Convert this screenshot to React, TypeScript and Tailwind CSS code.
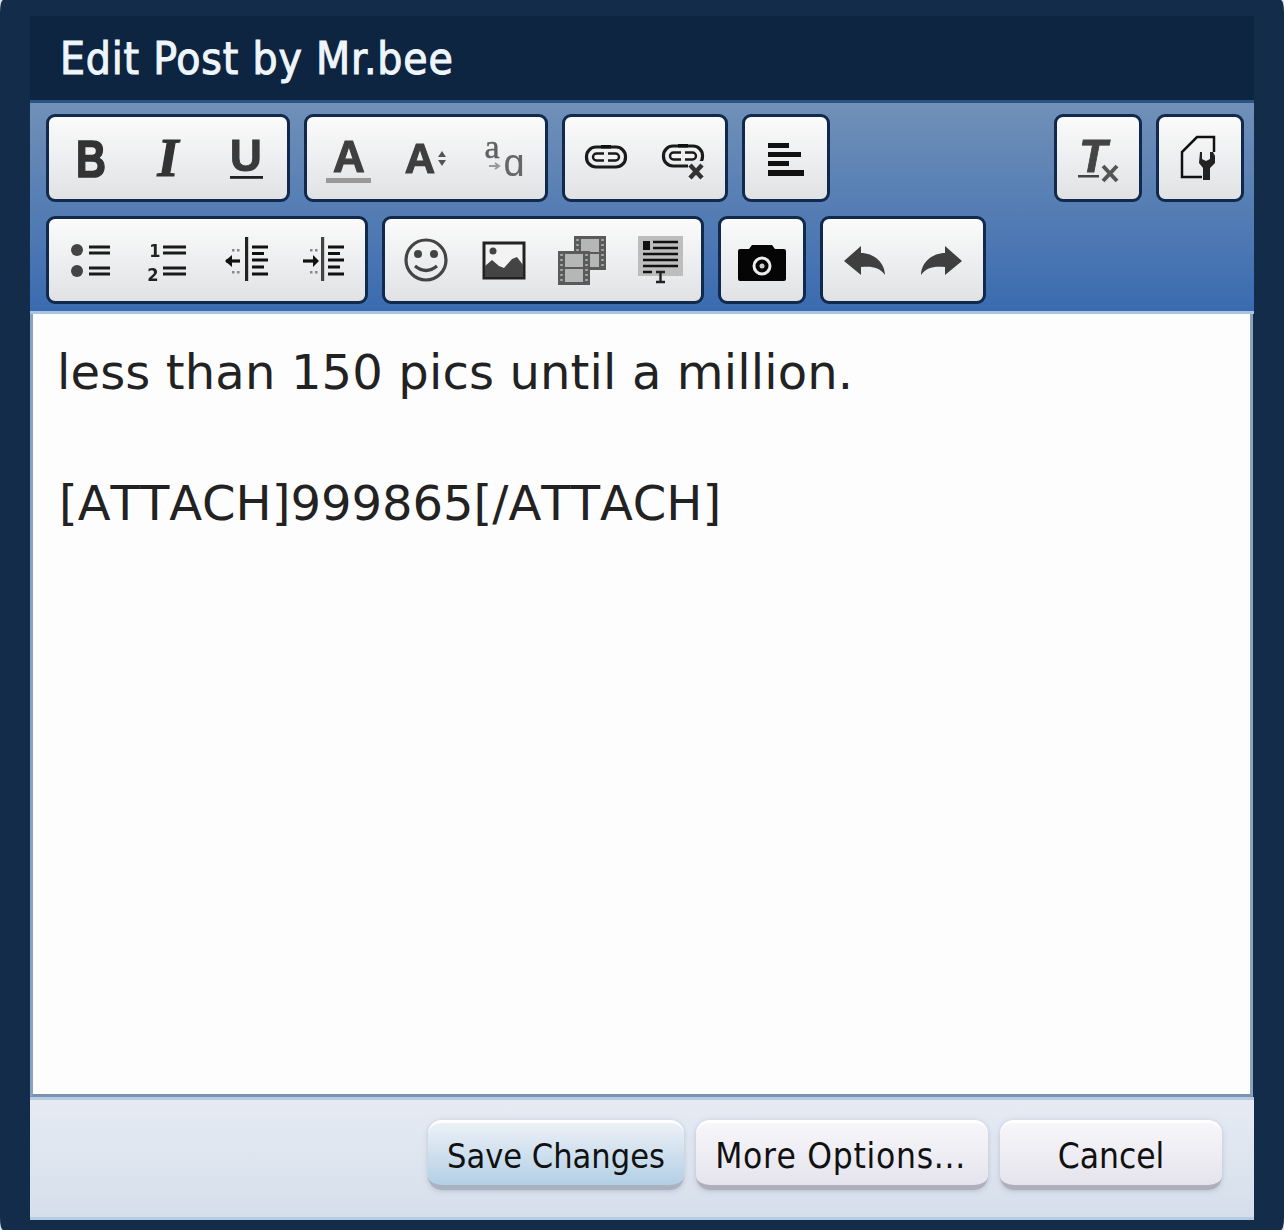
import React from "react";

const Ico = ({ children }: { children: React.ReactNode }) => (
  <svg width="78" height="78" viewBox="-39 -39 78 78" className="block blur-[0.7px]">
    {children}
  </svg>
);

const sans = "Liberation Sans, sans-serif";
const serif = "Liberation Serif, serif";
const cond = "DejaVu Sans Condensed, DejaVu Sans, sans-serif";

const Bold = () => (
  <Ico>
    <text x="1" y="19" textAnchor="middle" fontFamily={sans} fontWeight="700" fontSize="52" textLength="30" lengthAdjust="spacingAndGlyphs" fill="#333" stroke="#333" strokeWidth="1.600">B</text>
  </Ico>
);
const Italic = () => (
  <Ico>
    <text x="0" y="18" textAnchor="middle" fontFamily={serif} fontWeight="700" fontStyle="italic" fontSize="54" fill="#333" stroke="#333" strokeWidth="1.200">I</text>
  </Ico>
);
const Under = () => (
  <Ico>
    <text x="0" y="13" textAnchor="middle" fontFamily={sans} fontWeight="700" fontSize="44" fill="#3a3a3a" stroke="#3a3a3a" strokeWidth="1">U</text>
    <rect x="-16" y="18" width="33" height="2.800" fill="#222" />
  </Ico>
);
const Color = () => (
  <Ico>
    <text x="1" y="14" textAnchor="middle" fontFamily={sans} fontWeight="700" fontSize="44" fill="#3f3f3f" stroke="#3f3f3f" strokeWidth="1.200">A</text>
    <rect x="-22" y="20" width="45" height="5" fill="#999" />
  </Ico>
);
const Size = () => (
  <Ico>
    <text x="-6" y="15" textAnchor="middle" fontFamily={sans} fontWeight="700" fontSize="42" fill="#3f3f3f" stroke="#3f3f3f" strokeWidth="1.200">A</text>
    <path d="M12 -1 L16 -7 L20 -1 Z M12 2 H20 L16 8 Z" fill="#555" />
  </Ico>
);
const CaseIco = () => (
  <Ico>
    <text x="-12" y="0" textAnchor="middle" fontFamily={serif} fontSize="34" fill="#5f5f5f" stroke="#5f5f5f" strokeWidth="0.400">a</text>
    <text x="10" y="18" textAnchor="middle" fontFamily={sans} fontSize="38" fill="#666">ɑ</text>
    <path d="M-15 8 H-6 M-9 5 L-5 8 L-9 11" stroke="#999" strokeWidth="2" fill="none" />
  </Ico>
);
const Chain = ({ x = 0, y = 0 }: { x?: number; y?: number }) => (
  <g transform={`translate(${x} ${y})`} fill="none">
    <rect x="-19.500" y="-10" width="39" height="20" rx="9.500" stroke="#1a1a1a" strokeWidth="3.200" />
    <rect x="-13" y="-3.500" width="26" height="7" rx="3.500" stroke="#1a1a1a" strokeWidth="2.400" fill="#f4f4f4" />
    <rect x="-5" y="-12" width="10" height="3.500" fill="#111" />
    <rect x="-2" y="-5" width="4" height="10" fill="#eeeeee" />
  </g>
);
const Link = () => <Ico><Chain x={0} y={-1} /></Ico>;
const Unlink = () => (
  <Ico>
    <Chain x={-1} y={-2} />
    <rect x="4" y="3" width="17" height="20" fill="#e9eaeb" />
    <path d="M6 7 L18 20 M18 7 L6 20" stroke="#333" strokeWidth="4.500" />
  </Ico>
);
const Align = () => (
  <Ico>
    <g fill="#111">
      <rect x="-18" y="-15" width="21" height="5" />
      <rect x="-18" y="-6" width="33" height="5" />
      <rect x="-18" y="3" width="21" height="5" />
      <rect x="-18" y="12" width="36" height="6" />
    </g>
  </Ico>
);
const Clear = () => (
  <Ico>
    <text x="-5" y="14" textAnchor="middle" fontFamily={sans} fontWeight="700" fontStyle="italic" fontSize="46" fill="#444" stroke="#444" strokeWidth="0.800">T</text>
    <rect x="-20" y="17" width="21" height="2.500" fill="#444" />
    <path d="M5 8 L19 23 M19 8 L5 23" stroke="#555" strokeWidth="4" />
  </Ico>
);
const Source = () => (
  <Ico>
    <path d="M14 -6 V-21 H-3 L-18 -6 V19 H2" fill="none" stroke="#111" strokeWidth="2.500" />
    <path d="M-1 -6 L1 -6 L1 1 L5 3 L9 1 L9 -6 L12 -6 L14 -2 L14 5 L9 10 L9 22 L2 22 L2 10 L-2 5 Z" fill="#222" transform="translate(1 0)" />
  </Ico>
);
const Bullets = () => (
  <Ico>
    <g fill="#444">
      <circle cx="-13" cy="-10" r="6" />
      <circle cx="-13" cy="11" r="6" />
    </g>
    <path d="M-1 -13 H20 M-1 -7 H20 M-1 8 H20 M-1 14 H20" stroke="#1a1a1a" strokeWidth="3" />
  </Ico>
);
const Numbers = () => (
  <Ico>
    <g fontFamily={cond} fontWeight="700" fontSize="18" fill="#222" textAnchor="middle">
      <text x="-13" y="-3">1</text>
      <text x="-15" y="21">2</text>
    </g>
    <path d="M-5 -13 H18 M-5 -7 H18 M-5 8 H18 M-5 14 H18" stroke="#1a1a1a" strokeWidth="3" />
  </Ico>
);
const Lines = () => (
  <path d="M6 -13 H22 M6 -6.500 H18 M6 0 H22 M6 7 H18 M6 14 H22" stroke="#111" strokeWidth="3" />
);
const Dots = ({ x }: { x: number }) => (
  <g fill="#888">
    <rect x={x} y="-11" width="2.500" height="2.500" />
    <rect x={x + 5} y="-11" width="2.500" height="2.500" />
    <rect x={x} y="11" width="2.500" height="2.500" />
    <rect x={x + 5} y="11" width="2.500" height="2.500" />
  </g>
);
const Outdent = () => (
  <Ico>
    <rect x="-1" y="-23" width="3.200" height="44" fill="#222" />
    <Lines />
    <Dots x={-14} />
    <path d="M-20 1 H-6" stroke="#111" strokeWidth="3.200" />
    <path d="M-21 1 L-14 -5 V7 Z" fill="#111" />
  </Ico>
);
const Indent = () => (
  <Ico>
    <rect x="-3" y="-23" width="3.200" height="44" fill="#444" />
    <g transform="translate(-2 0)"><Lines /></g>
    <Dots x={-14} />
    <path d="M-21 1 H-8" stroke="#111" strokeWidth="3.200" />
    <path d="M-5 1 L-11 -5 V7 Z" fill="#111" />
  </Ico>
);
const Smile = () => (
  <Ico>
    <circle cx="0" cy="0" r="20" fill="none" stroke="#444" strokeWidth="3.200" />
    <circle cx="-8" cy="-6" r="4" fill="#444" />
    <circle cx="8" cy="-6" r="4" fill="#444" />
    <path d="M-11 6 Q0 15 11 6" fill="none" stroke="#444" strokeWidth="3.200" />
  </Ico>
);
const Picture = () => (
  <Ico>
    <rect x="-20" y="-17" width="40" height="35" fill="#f3f3f3" stroke="#222" strokeWidth="3" />
    <circle cx="-11" cy="-9" r="3.500" fill="#444" />
    <path d="M-19 17 V6 L-12 0 L-5 6 L0 8 L8 -1 L13 -3 L19 5 V17 Z" fill="#444" />
  </Ico>
);
const Frame = ({ x, y }: { x: number; y: number }) => (
  <g transform={`translate(${x} ${y})`}>
    <rect x="0" y="0" width="32" height="34" fill="#5a5a5a" />
    <rect x="7" y="3" width="18" height="13" fill="#b5b6b6" />
    <rect x="7" y="18" width="18" height="13" fill="#b5b6b6" />
    <path d="M3.500 3 V31 M28.500 3 V31" stroke="#aaa" strokeWidth="2.500" strokeDasharray="2 3" />
  </g>
);
const Film = () => (
  <Ico>
    <Frame x={-8} y={-24} />
    <Frame x={-24} y={-9} />
  </Ico>
);
const Para = () => (
  <Ico>
    <rect x="-22" y="-24" width="45" height="40" fill="#bdbdbd" />
    <rect x="-17" y="-19" width="7" height="9" fill="#111" />
    <path d="M-7 -18 H18 M-7 -12 H18 M-17 -6 H18 M-17 0 H18 M-17 6 H18 M-17 12 H-8" stroke="#111" strokeWidth="2.400" />
    <path d="M-4 12 H5 M-4 22 H5 M0.500 12 V22" stroke="#222" strokeWidth="2.400" />
    <path d="M-22 18 H-6 M8 18 H22" stroke="#eee" strokeWidth="2" strokeDasharray="2 3" />
  </Ico>
);
const Camera = () => (
  <Ico>
    <path d="M-24 -9 Q-24 -11 -22 -11 H-13 L-10 -15 H10 L13 -11 H22 Q24 -11 24 -9 V19 Q24 21 22 21 H-22 Q-24 21 -24 19 Z" fill="#050505" />
    <circle cx="0" cy="6" r="8" fill="none" stroke="#ececec" strokeWidth="3" />
    <circle cx="0" cy="6" r="2.500" fill="#ccc" />
  </Ico>
);
const Undo = () => (
  <Ico>
    <path d="M-20 1 L-3 -14 V-7 C10 -7 21 3 21 15 C15 7 8 6 -3 7 V15 Z" fill="#3f3f3f" />
  </Ico>
);
const Redo = () => (
  <Ico>
    <path d="M20 1 L3 -14 V-7 C-10 -7 -21 3 -21 15 C-15 7 -8 6 3 7 V15 Z" fill="#3f3f3f" />
  </Ico>
);

const Group = ({ children }: { children: React.ReactNode }) => (
  <div className="flex h-[88px] rounded-[9px] border-[3px] border-[#10294d] bg-gradient-to-b from-[#fbfbfb] to-[#e0e2e4] p-[2px]">
    {children}
  </div>
);

const base =
  "flex h-[70px] items-center justify-center rounded-[14px] border-t-[3px] border-b-[5px] border-t-white pt-[4px] text-[#111] shadow-[0_1px_5px_rgba(150,160,180,0.5)] font-['DejaVu_Sans_Condensed','DejaVu_Sans',sans-serif] [font-kerning:none]";

export default function App() {
  return (
    <div className="h-[1230px] w-[1284px] overflow-hidden bg-[#dfe6ee]">
      <div className="flex h-[1230px] w-[1284px] flex-col rounded-[3px/12px] bg-[#122c4a] px-[30px] pt-[16px]">
        <div className="flex h-[84px] items-center bg-[#0d2540] pl-[30px] pt-[2px] text-[44px] font-normal leading-none tracking-[0.8px] text-[#eef5fb] [-webkit-text-stroke:1px_#eef5fb] font-['DejaVu_Sans_Condensed','DejaVu_Sans',sans-serif]">
          Edit Post by Mr.bee
        </div>
        <div className="flex flex-col gap-[14px] border-t-[3px] border-b-[3px] border-t-[#2a5481] border-b-[#a9c4e0] bg-gradient-to-b from-[#7090b7] to-[#3a6bb0] pl-[16px] pr-[10px] pt-[11px] pb-[7px]">
          <div className="flex gap-[14px]">
            <Group><Bold /><Italic /><Under /></Group>
            <Group><Color /><Size /><CaseIco /></Group>
            <Group><Link /><Unlink /></Group>
            <Group><Align /></Group>
            <div className="ml-auto flex gap-[14px]">
              <Group><Clear /></Group>
              <Group><Source /></Group>
            </div>
          </div>
          <div className="flex gap-[14px]">
            <Group><Bullets /><Numbers /><Outdent /><Indent /></Group>
            <Group><Smile /><Picture /><Film /><Para /></Group>
            <Group><Camera /></Group>
            <Group><Undo /><Redo /></Group>
          </div>
        </div>
        <div className="mr-[1px] h-[783px] border-x-[3px] border-b-[3px] border-x-[#8aa3bf] border-b-[#7b92b0] bg-[#fdfdfe] pl-[24px] pr-[20px] pt-[26px] text-[48px] leading-[65.5px] text-[#222] [font-kerning:none] font-['DejaVu_Sans',sans-serif]">
          <div className="tracking-[0.14px]">less than 150 pics until a million.</div>
          <div>&nbsp;</div>
          <div className="pl-[2px]">[ATTACH]999865[/ATTACH]</div>
        </div>
        <div className="flex h-[123px] items-start justify-end gap-[12px] border-t-[3px] border-b-[3px] border-t-[#b5cce2] border-b-[#b5cce2] bg-gradient-to-b from-[#e6ebf3] to-[#d5dfeb] pr-[32px] pt-[20px]">
          <button className={`${base} w-[256px] border-b-[#aab2c0] bg-gradient-to-b from-[#ecf1f7] to-[#b3cfe5] text-[34px]`}>Save Changes</button>
          <button className={`${base} w-[292px] border-b-[#adb0bc] bg-gradient-to-b from-[#f7f6fa] to-[#e5e4ec] pr-[3px] text-[35px] tracking-[0.7px]`}>More Options...</button>
          <button className={`${base} w-[222px] border-b-[#adb0bc] bg-gradient-to-b from-[#f7f6fa] to-[#e5e4ec] text-[35px]`}>Cancel</button>
        </div>
      </div>
    </div>
  );
}
